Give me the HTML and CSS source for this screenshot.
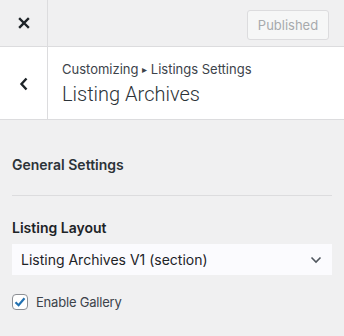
FILE: index.html
```html
<!DOCTYPE html>
<html lang="en">
<head>
    <meta charset="UTF-8">
    <meta name="viewport" content="width=device-width, initial-scale=1.0">
    <title>Customizer</title>
    <link rel="stylesheet" href="styles.css">
</head>
<body>
    <div class="customizer">
        <!-- Top bar -->
        <div class="top-bar">
            <button class="icon-button close-button" aria-label="Close">
                <svg width="12" height="12" viewBox="0 0 12 12">
                    <path d="M2 2 L10 10 M10 2 L2 10" stroke="#1d2327" stroke-width="2.4" stroke-linecap="square"/>
                </svg>
            </button>
            <div class="top-actions">
                <button class="publish-button" disabled>Published</button>
            </div>
        </div>

        <!-- Section title -->
        <div class="section-header">
            <button class="icon-button back-button" aria-label="Back">
                <svg width="10" height="14" viewBox="0 0 10 14">
                    <path d="M7.5 1.5 L2.5 7 L7.5 12.5" fill="none" stroke="#1d2327" stroke-width="2.4"/>
                </svg>
            </button>
            <div class="section-title">
                <span class="breadcrumb">Customizing <span class="crumb-sep">&#9656;</span> Listings Settings</span>
                <h3>Listing Archives</h3>
            </div>
        </div>

        <!-- Controls -->
        <div class="controls">
            <h4 class="group-title">General Settings</h4>
            <hr class="divider">

            <label class="control-label" for="layout">Listing Layout</label>
            <div class="select-wrap">
                <select id="layout">
                    <option>Listing Archives V1 (section)</option>
                </select>
                <svg class="select-arrow" width="12" height="8" viewBox="0 0 12 8">
                    <path d="M1.5 1.5 L6 6 L10.5 1.5" fill="none" stroke="#50575e" stroke-width="1.6"/>
                </svg>
            </div>

            <label class="checkbox-row">
                <span class="checkbox">
                    <svg width="14" height="14" viewBox="0 0 14 14">
                        <path d="M2.5 7.2 L5.6 10.2 L11.5 3.2" fill="none" stroke="#2271b1" stroke-width="2.2"/>
                    </svg>
                </span>
                Enable Gallery
            </label>
        </div>
    </div>
</body>
</html>
```

FILE: styles.css
```css
/* Base Styles */
* {
    margin: 0;
    padding: 0;
    box-sizing: border-box;
}

body {
    font-family: Inter, 'Noto Sans', sans-serif;
    background-color: #f0f0f1;
    color: #1d2327;
}

.customizer {
    width: 344px;
    height: 336px;
    overflow: hidden;
}

/* Top bar */
.top-bar {
    display: flex;
    height: 47px;
    border-bottom: 1px solid #dcdcde;
    background-color: #f0f0f1;
}

.icon-button {
    width: 48px;
    border: none;
    border-right: 1px solid #dcdcde;
    background: transparent;
    display: flex;
    align-items: center;
    justify-content: center;
}

.top-actions {
    flex: 1;
    display: flex;
    justify-content: flex-end;
    align-items: flex-start;
    padding: 10px 15px 0 0;
}

.publish-button {
    font-family: inherit;
    font-size: 13px;
    width: 82px;
    height: 30px;
    border: 1px solid #dcdcde;
    border-radius: 3px;
    background-color: #f6f7f7;
    color: #a7aaad;
}

/* Section header */
.section-header {
    display: flex;
    height: 73px;
    background-color: #fff;
    border-bottom: 1px solid #dcdcde;
}

.back-button {
    padding-top: 1px;
}

.section-title {
    display: flex;
    flex-direction: column;
    padding: 12px 0 0 14px;
}

.breadcrumb {
    font-size: 13px;
    line-height: 20px;
    color: #3c434a;
}

.crumb-sep {
    font-size: 10px;
    vertical-align: 1px;
}

.section-title h3 {
    font-family: Roboto, Inter, sans-serif;
    font-size: 20px;
    font-weight: 300;
    line-height: 30px;
    color: #2c3338;
}

/* Controls */
.controls {
    padding: 33px 12px 0 12px;
}

.group-title {
    font-size: 14px;
    font-weight: 600;
    line-height: 24px;
    color: #2c3338;
}

.divider {
    border: none;
    border-top: 1px solid #dcdcde;
    margin: 18px 0 20px;
}

.control-label {
    display: block;
    font-size: 14px;
    font-weight: 600;
    line-height: 24px;
    margin-bottom: 4px;
    color: #1d2327;
}

.select-wrap {
    position: relative;
}

.select-wrap select {
    appearance: none;
    -webkit-appearance: none;
    width: 100%;
    height: 31px;
    border: none;
    background-color: #fbfbfe;
    font-family: inherit;
    font-size: 14px;
    color: #1d2327;
    padding: 0 30px 0 9px;
}

.select-arrow {
    position: absolute;
    right: 10px;
    top: 12px;
    pointer-events: none;
}

.checkbox-row {
    display: flex;
    align-items: center;
    gap: 8px;
    margin-top: 19px;
    font-size: 13px;
    letter-spacing: -0.2px;
    color: #3c434a;
}

.checkbox {
    width: 16px;
    height: 16px;
    border: 1px solid #8c8f94;
    border-radius: 4px;
    background-color: #fff;
    display: flex;
    align-items: center;
    justify-content: center;
}
```
